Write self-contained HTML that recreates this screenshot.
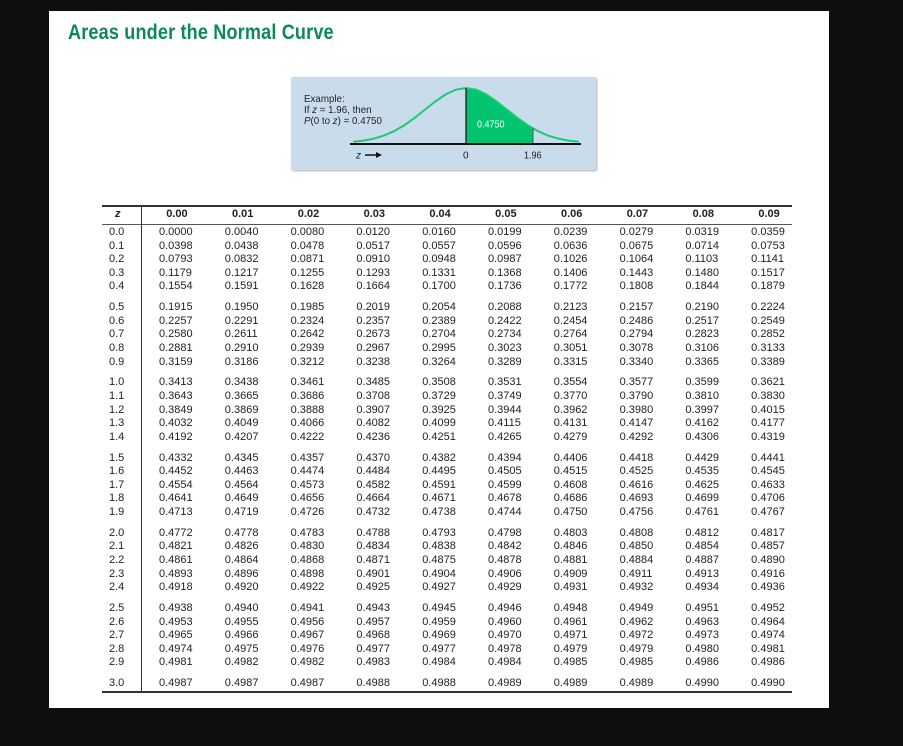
<!DOCTYPE html>
<html><head><meta charset="utf-8"><style>
*{margin:0;padding:0;box-sizing:border-box}
body{width:903px;height:746px;background:#0e0e0e;position:relative;overflow:hidden;font-family:"Liberation Sans",Arial,sans-serif;color:#222}
#panel{position:absolute;left:49px;top:11px;width:780px;height:697px;background:#fff}
h1{position:absolute;left:68px;top:21px;font-size:21px;font-weight:bold;color:#0b8a55;transform:scaleX(0.86);transform-origin:0 0;white-space:nowrap;letter-spacing:0.2px}
#box{position:absolute;left:291px;top:77px;width:305px;height:93px;background:#c9dcec;border-radius:2px;box-shadow:1px 1px 2px #aaa}
.ex{position:absolute;left:304px;font-size:10.5px;color:#222;transform:scaleX(0.93);transform-origin:0 0;white-space:nowrap;line-height:11px}
.line{position:absolute;background:#333}
.r{position:absolute;left:109px;display:flex;font-size:11px;line-height:14px;height:14px;white-space:nowrap}
.r span{display:block;width:65.8px}
.r span.z{width:50px}
.h{font-weight:bold}
.h span{text-align:center;padding-right:30px}
</style></head><body>
<div id="panel"></div>
<h1>Areas under the Normal Curve</h1>
<div id="box"></div>
<div class="ex" style="top:94px">Example:</div>
<div class="ex" style="top:105px">If <i>z</i> = 1.96, then</div>
<div class="ex" style="top:116px"><i>P</i>(0 to <i>z</i>) = 0.4750</div>
<svg style="position:absolute;left:0;top:0" width="903" height="746">
<polygon fill="#00c470" points="466,143.5 466,88 476.25,89.7 486.5,94.5 496.75,101.5 507,109.6 517.25,117.8 527.5,125.1 533,128.4 533,143.5"/>
<polyline fill="none" stroke="#1fc874" stroke-width="2" points="353.25,141.7 363.5,140.6 373.75,138.6 384,135.6 394.25,131.1 404.5,125.1 414.75,117.8 425,109.6 435.25,101.5 445.5,94.5 455.75,89.7 466,88 476.25,89.7 486.5,94.5 496.75,101.5 507,109.6 517.25,117.8 527.5,125.1 537.75,131.1 548,135.6 558.25,138.6 568.5,140.6 578.75,141.7"/>
<line x1="466" y1="88" x2="466" y2="144" stroke="#111" stroke-width="1.2"/>
<line x1="533" y1="128" x2="533" y2="144" stroke="#555" stroke-width="1"/>
<line x1="350" y1="144" x2="581" y2="144" stroke="#111" stroke-width="2"/>
<line x1="365" y1="155" x2="378" y2="155" stroke="#111" stroke-width="1.5"/>
<polygon points="376,152 382,155 376,158" fill="#111"/>
<text x="356" y="158.5" font-size="10" font-style="italic" font-family="Liberation Sans" fill="#222">z</text>
<text x="463" y="158.5" font-size="10" font-family="Liberation Sans" fill="#222">0</text>
<text x="524" y="158.5" font-size="10" font-family="Liberation Sans" fill="#222" transform="translate(524 0) scale(0.9 1) translate(-524 0)">1.96</text>
<text x="477" y="127.5" font-size="10" font-family="Liberation Sans" fill="#fff" transform="translate(477 0) scale(0.9 1) translate(-477 0)">0.4750</text>
</svg>
<div class="line" style="left:102px;top:205px;width:690px;height:1.5px"></div>
<div class="line" style="left:102px;top:224px;width:690px;height:1px;background:#555"></div>
<div class="line" style="left:141px;top:205px;width:1px;height:487px"></div>
<div class="line" style="left:102px;top:691px;width:690px;height:1.5px"></div>
<div class="r h" style="top:207px"><span class="z" style="text-align:left;padding-left:6px;font-style:italic">z</span><span>0.00</span><span>0.01</span><span>0.02</span><span>0.03</span><span>0.04</span><span>0.05</span><span>0.06</span><span>0.07</span><span>0.08</span><span>0.09</span></div>
<div class="r" style="top:225px"><span class="z">0.0</span><span>0.0000</span><span>0.0040</span><span>0.0080</span><span>0.0120</span><span>0.0160</span><span>0.0199</span><span>0.0239</span><span>0.0279</span><span>0.0319</span><span>0.0359</span></div>
<div class="r" style="top:238.6px"><span class="z">0.1</span><span>0.0398</span><span>0.0438</span><span>0.0478</span><span>0.0517</span><span>0.0557</span><span>0.0596</span><span>0.0636</span><span>0.0675</span><span>0.0714</span><span>0.0753</span></div>
<div class="r" style="top:252.2px"><span class="z">0.2</span><span>0.0793</span><span>0.0832</span><span>0.0871</span><span>0.0910</span><span>0.0948</span><span>0.0987</span><span>0.1026</span><span>0.1064</span><span>0.1103</span><span>0.1141</span></div>
<div class="r" style="top:265.8px"><span class="z">0.3</span><span>0.1179</span><span>0.1217</span><span>0.1255</span><span>0.1293</span><span>0.1331</span><span>0.1368</span><span>0.1406</span><span>0.1443</span><span>0.1480</span><span>0.1517</span></div>
<div class="r" style="top:279.4px"><span class="z">0.4</span><span>0.1554</span><span>0.1591</span><span>0.1628</span><span>0.1664</span><span>0.1700</span><span>0.1736</span><span>0.1772</span><span>0.1808</span><span>0.1844</span><span>0.1879</span></div>
<div class="r" style="top:300.2px"><span class="z">0.5</span><span>0.1915</span><span>0.1950</span><span>0.1985</span><span>0.2019</span><span>0.2054</span><span>0.2088</span><span>0.2123</span><span>0.2157</span><span>0.2190</span><span>0.2224</span></div>
<div class="r" style="top:313.8px"><span class="z">0.6</span><span>0.2257</span><span>0.2291</span><span>0.2324</span><span>0.2357</span><span>0.2389</span><span>0.2422</span><span>0.2454</span><span>0.2486</span><span>0.2517</span><span>0.2549</span></div>
<div class="r" style="top:327.4px"><span class="z">0.7</span><span>0.2580</span><span>0.2611</span><span>0.2642</span><span>0.2673</span><span>0.2704</span><span>0.2734</span><span>0.2764</span><span>0.2794</span><span>0.2823</span><span>0.2852</span></div>
<div class="r" style="top:341px"><span class="z">0.8</span><span>0.2881</span><span>0.2910</span><span>0.2939</span><span>0.2967</span><span>0.2995</span><span>0.3023</span><span>0.3051</span><span>0.3078</span><span>0.3106</span><span>0.3133</span></div>
<div class="r" style="top:354.6px"><span class="z">0.9</span><span>0.3159</span><span>0.3186</span><span>0.3212</span><span>0.3238</span><span>0.3264</span><span>0.3289</span><span>0.3315</span><span>0.3340</span><span>0.3365</span><span>0.3389</span></div>
<div class="r" style="top:375.4px"><span class="z">1.0</span><span>0.3413</span><span>0.3438</span><span>0.3461</span><span>0.3485</span><span>0.3508</span><span>0.3531</span><span>0.3554</span><span>0.3577</span><span>0.3599</span><span>0.3621</span></div>
<div class="r" style="top:389px"><span class="z">1.1</span><span>0.3643</span><span>0.3665</span><span>0.3686</span><span>0.3708</span><span>0.3729</span><span>0.3749</span><span>0.3770</span><span>0.3790</span><span>0.3810</span><span>0.3830</span></div>
<div class="r" style="top:402.6px"><span class="z">1.2</span><span>0.3849</span><span>0.3869</span><span>0.3888</span><span>0.3907</span><span>0.3925</span><span>0.3944</span><span>0.3962</span><span>0.3980</span><span>0.3997</span><span>0.4015</span></div>
<div class="r" style="top:416.2px"><span class="z">1.3</span><span>0.4032</span><span>0.4049</span><span>0.4066</span><span>0.4082</span><span>0.4099</span><span>0.4115</span><span>0.4131</span><span>0.4147</span><span>0.4162</span><span>0.4177</span></div>
<div class="r" style="top:429.8px"><span class="z">1.4</span><span>0.4192</span><span>0.4207</span><span>0.4222</span><span>0.4236</span><span>0.4251</span><span>0.4265</span><span>0.4279</span><span>0.4292</span><span>0.4306</span><span>0.4319</span></div>
<div class="r" style="top:450.6px"><span class="z">1.5</span><span>0.4332</span><span>0.4345</span><span>0.4357</span><span>0.4370</span><span>0.4382</span><span>0.4394</span><span>0.4406</span><span>0.4418</span><span>0.4429</span><span>0.4441</span></div>
<div class="r" style="top:464.2px"><span class="z">1.6</span><span>0.4452</span><span>0.4463</span><span>0.4474</span><span>0.4484</span><span>0.4495</span><span>0.4505</span><span>0.4515</span><span>0.4525</span><span>0.4535</span><span>0.4545</span></div>
<div class="r" style="top:477.8px"><span class="z">1.7</span><span>0.4554</span><span>0.4564</span><span>0.4573</span><span>0.4582</span><span>0.4591</span><span>0.4599</span><span>0.4608</span><span>0.4616</span><span>0.4625</span><span>0.4633</span></div>
<div class="r" style="top:491.4px"><span class="z">1.8</span><span>0.4641</span><span>0.4649</span><span>0.4656</span><span>0.4664</span><span>0.4671</span><span>0.4678</span><span>0.4686</span><span>0.4693</span><span>0.4699</span><span>0.4706</span></div>
<div class="r" style="top:505px"><span class="z">1.9</span><span>0.4713</span><span>0.4719</span><span>0.4726</span><span>0.4732</span><span>0.4738</span><span>0.4744</span><span>0.4750</span><span>0.4756</span><span>0.4761</span><span>0.4767</span></div>
<div class="r" style="top:525.8px"><span class="z">2.0</span><span>0.4772</span><span>0.4778</span><span>0.4783</span><span>0.4788</span><span>0.4793</span><span>0.4798</span><span>0.4803</span><span>0.4808</span><span>0.4812</span><span>0.4817</span></div>
<div class="r" style="top:539.4px"><span class="z">2.1</span><span>0.4821</span><span>0.4826</span><span>0.4830</span><span>0.4834</span><span>0.4838</span><span>0.4842</span><span>0.4846</span><span>0.4850</span><span>0.4854</span><span>0.4857</span></div>
<div class="r" style="top:553px"><span class="z">2.2</span><span>0.4861</span><span>0.4864</span><span>0.4868</span><span>0.4871</span><span>0.4875</span><span>0.4878</span><span>0.4881</span><span>0.4884</span><span>0.4887</span><span>0.4890</span></div>
<div class="r" style="top:566.6px"><span class="z">2.3</span><span>0.4893</span><span>0.4896</span><span>0.4898</span><span>0.4901</span><span>0.4904</span><span>0.4906</span><span>0.4909</span><span>0.4911</span><span>0.4913</span><span>0.4916</span></div>
<div class="r" style="top:580.2px"><span class="z">2.4</span><span>0.4918</span><span>0.4920</span><span>0.4922</span><span>0.4925</span><span>0.4927</span><span>0.4929</span><span>0.4931</span><span>0.4932</span><span>0.4934</span><span>0.4936</span></div>
<div class="r" style="top:601px"><span class="z">2.5</span><span>0.4938</span><span>0.4940</span><span>0.4941</span><span>0.4943</span><span>0.4945</span><span>0.4946</span><span>0.4948</span><span>0.4949</span><span>0.4951</span><span>0.4952</span></div>
<div class="r" style="top:614.6px"><span class="z">2.6</span><span>0.4953</span><span>0.4955</span><span>0.4956</span><span>0.4957</span><span>0.4959</span><span>0.4960</span><span>0.4961</span><span>0.4962</span><span>0.4963</span><span>0.4964</span></div>
<div class="r" style="top:628.2px"><span class="z">2.7</span><span>0.4965</span><span>0.4966</span><span>0.4967</span><span>0.4968</span><span>0.4969</span><span>0.4970</span><span>0.4971</span><span>0.4972</span><span>0.4973</span><span>0.4974</span></div>
<div class="r" style="top:641.8px"><span class="z">2.8</span><span>0.4974</span><span>0.4975</span><span>0.4976</span><span>0.4977</span><span>0.4977</span><span>0.4978</span><span>0.4979</span><span>0.4979</span><span>0.4980</span><span>0.4981</span></div>
<div class="r" style="top:655.4px"><span class="z">2.9</span><span>0.4981</span><span>0.4982</span><span>0.4982</span><span>0.4983</span><span>0.4984</span><span>0.4984</span><span>0.4985</span><span>0.4985</span><span>0.4986</span><span>0.4986</span></div>
<div class="r" style="top:676.2px"><span class="z">3.0</span><span>0.4987</span><span>0.4987</span><span>0.4987</span><span>0.4988</span><span>0.4988</span><span>0.4989</span><span>0.4989</span><span>0.4989</span><span>0.4990</span><span>0.4990</span></div>
</body></html>
